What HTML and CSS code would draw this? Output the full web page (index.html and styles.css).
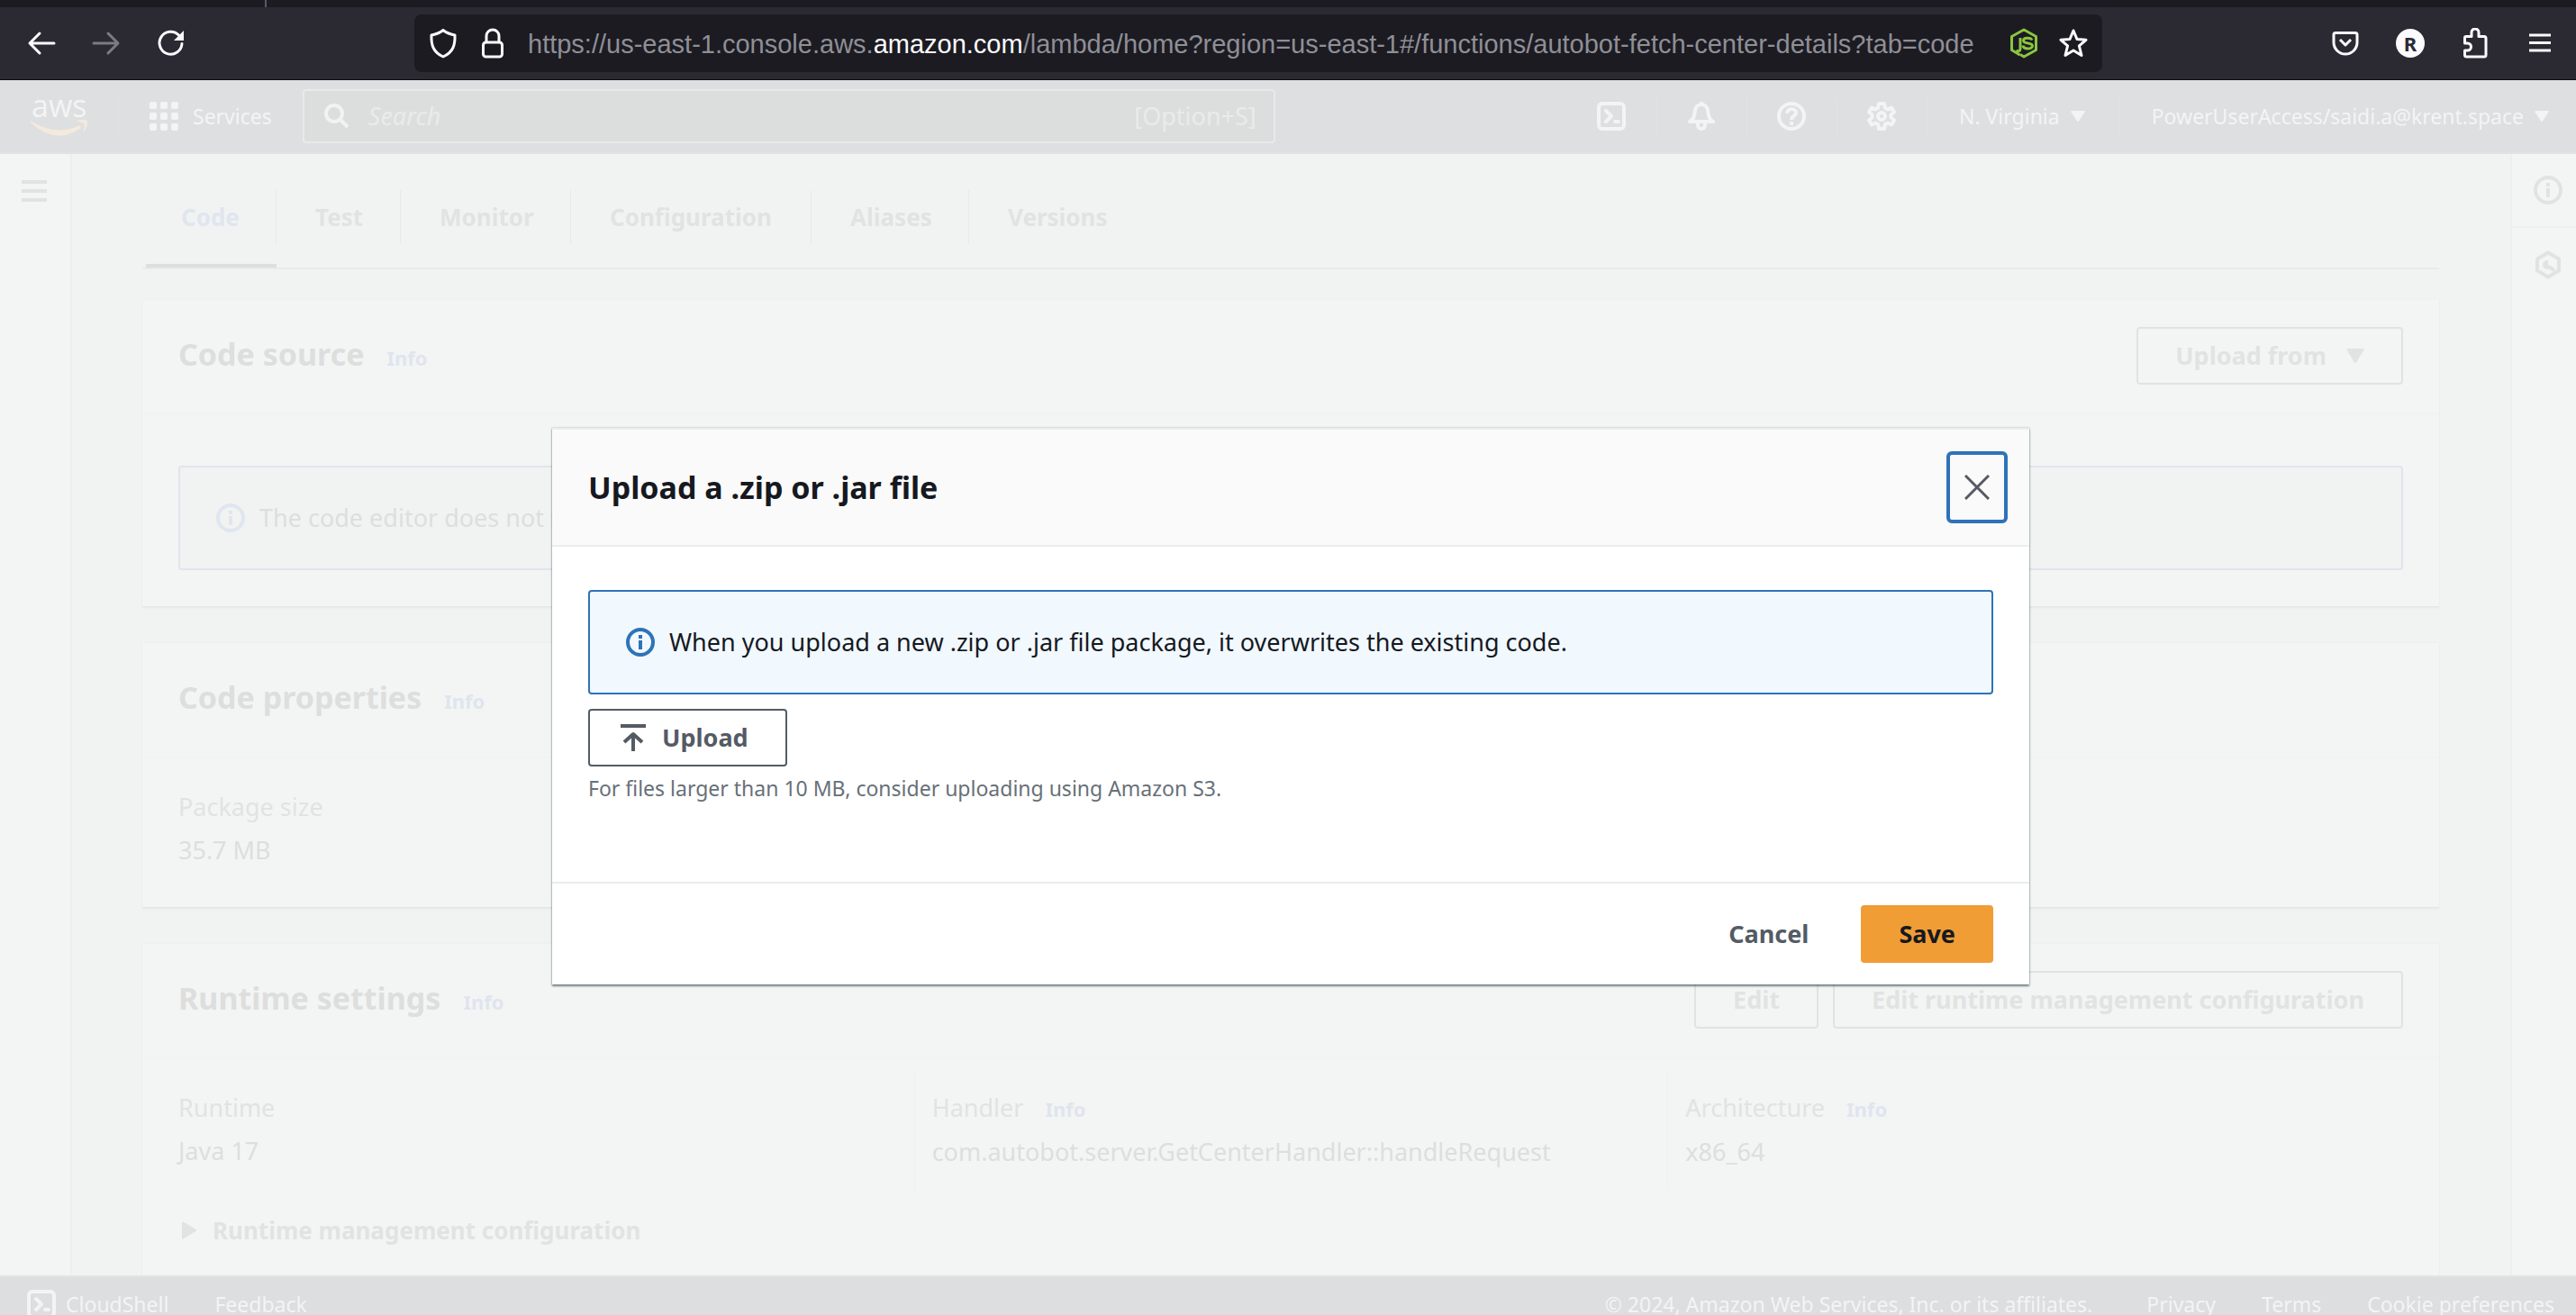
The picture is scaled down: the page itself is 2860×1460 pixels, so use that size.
FILE: index.html
```html
<!DOCTYPE html>
<html lang="en">
<head>
<meta charset="utf-8">
<title>autobot-fetch-center-details - Lambda</title>
<link rel="stylesheet" href="styles.css">
</head>
<body>
<svg class="sprite" aria-hidden="true">
  <symbol id="info" viewBox="0 0 32 32"><circle cx="16" cy="16" r="14" fill="none" stroke="currentColor" stroke-width="4"/><path d="M16 14v10M16 8v4" fill="none" stroke="currentColor" stroke-width="4"/></symbol>
  <symbol id="shell" viewBox="0 0 32 32"><rect x="2" y="2" width="28" height="28" rx="4" fill="none" stroke="currentColor" stroke-width="4"/><path d="M10 10l6 6-6 6M20 22h4" fill="none" stroke="currentColor" stroke-width="4" stroke-linecap="round" stroke-linejoin="round"/></symbol>
  <symbol id="caret" viewBox="0 0 20 16"><path d="M1.500 0h17q1.500 0 1 1.500l-8.500 14q-1 1-2 0L.5 1.500Q0 0 1.500 0z" fill="currentColor"/></symbol>
</svg>

<header class="browser">
  <div class="tabstrip"><span class="tabstrip-mark"></span></div>
  <div class="toolbar">
    <div class="tools">
      <button class="tool" aria-label="Back"><svg width="32" height="32" viewBox="0 0 32 32"><path d="M30 16H4M14 5L3 16l11 11" class="line thick"/></svg></button>
      <button class="tool tool-off" aria-label="Forward"><svg width="32" height="32" viewBox="0 0 32 32"><path d="M2 16h26M18 5l11 11-11 11" class="line thick"/></svg></button>
      <button class="tool" aria-label="Reload"><svg width="32" height="32" viewBox="0 0 32 32"><path d="M28 16.500A12.500 12.500 0 1 1 24.500 7" class="line thick"/><path d="M30 2v11H19z" fill="currentColor"/></svg></button>
    </div>
    <div class="urlbar">
      <svg width="32" height="34" viewBox="0 0 32 34"><path d="M16 2.500C12 6 8 7 3 8c-.5 11 2 19 13 24C27 27 29.500 19 29 8 24 7 20 6 16 2.500z" class="line"/></svg>
      <svg width="32" height="34" viewBox="0 0 32 34"><rect x="5.500" y="16" width="21" height="16" rx="3" class="line"/><path d="M9 16V9a7 7 0 0 1 14 0v7" class="line"/></svg>
      <div class="url">https://us-east-1.console.aws.<span class="host">amazon.com</span>/lambda/home?region=us-east-1#/functions/autobot-fetch-center-details?tab=code</div>
      <svg class="node" width="32" height="34" viewBox="0 0 32 34"><path d="M11.500 30L2.500 24.500v-15L16 2l13.500 7.500v15L16 32l-4-2.500M12 11v12c0 3-2.500 3.500-4.500 2M25 13.500c-1-3-9.500-3.500-9.500.5 0 4.500 10 1.500 10 6 0 4-10 4-10.500-.5" class="line"/></svg>
      <svg width="32" height="34" viewBox="0 0 32 34"><path d="M16 3l4 9.500 10 .8-7.600 6.500 2.600 10.700L16 25l-9 5.500 2.600-10.700L2 13.300l10-.8z" class="line"/></svg>
    </div>
    <div class="tools tools-end">
      <button class="tool" aria-label="Save to Pocket"><svg width="32" height="32" viewBox="0 0 32 32"><path d="M5 4.500h22q2 0 2 2V15a13 13 0 0 1-26 0V6.500q0-2 2-2zM10 12l6 6 6-6" class="line"/></svg></button>
      <button class="tool" aria-label="Account"><span class="avatar">R</span></button>
      <button class="tool" aria-label="Extensions"><svg width="32" height="34" viewBox="0 0 32 34"><path d="M4.500 17v-6q0-1.500 1.500-1.500h6V5a4 4 0 0 1 8 0v4.500h6q2 0 2 2V30q0 2-2 2H6.500q-2 0-2-2v-5h3a4 4 0 0 0 0-8z" class="line"/></svg></button>
      <button class="tool" aria-label="Menu"><svg width="32" height="32" viewBox="0 0 32 32"><path d="M4 7h24M4 15.500h24M4 24h24" class="line"/></svg></button>
    </div>
  </div>
</header>

<div class="app">
  <nav class="awsnav">
    <a class="logo" href="#" aria-label="AWS home"><svg width="66" height="72" viewBox="0 -14 66 72"><text x="1" y="23" class="logo-text">aws</text><path d="M0 27q28 18 55 5l1 3q-28 20-56-6z" class="smile"/><path d="M50 28q8-4 13-1 1 6-5 14 2-7 1-11-3-2-9-2z" class="smile"/></svg></a>
    <button class="services"><svg width="32" height="32" viewBox="0 0 32 32" fill="currentColor"><rect width="8" height="8" rx="2"/><rect x="12" width="8" height="8" rx="2"/><rect x="24" width="8" height="8" rx="2"/><rect y="12" width="8" height="8" rx="2"/><rect x="12" y="12" width="8" height="8" rx="2"/><rect x="24" y="12" width="8" height="8" rx="2"/><rect y="24" width="8" height="8" rx="2"/><rect x="12" y="24" width="8" height="8" rx="2"/><rect x="24" y="24" width="8" height="8" rx="2"/></svg>Services</button>
    <label class="search"><svg width="28" height="28" viewBox="0 0 28 28"><circle cx="11" cy="11" r="9" class="line four"/><path d="M17 17l9 9" class="line four"/></svg><input type="search" placeholder="Search" aria-label="Search"><span>[Option+S]</span></label>
    <div class="nav-end">
      <button class="cell icon-cell" aria-label="CloudShell"><svg width="32" height="32"><use href="#shell"/></svg></button>
      <button class="cell icon-cell" aria-label="Notifications"><svg width="32" height="32" viewBox="0 0 32 32"><path d="M3 22c5-3 5-7 6-12a7 7 0 0 1 14 0c1 5 1 9 6 12zM16 0v4" class="line four"/><path d="M12 24v2a4 4 0 0 0 8 0v-2" class="line four"/></svg></button>
      <button class="cell icon-cell" aria-label="Help"><svg width="32" height="32" viewBox="0 0 32 32"><circle cx="16" cy="16" r="14" class="line four"/><path d="M11 13c0-7 11-6 10 0-1 3-5 3-5 7M16 22v4" class="line four"/></svg></button>
      <button class="cell icon-cell" aria-label="Settings"><svg width="32" height="32" viewBox="0 0 32 32"><path d="M13 2h6l1 5 3 1.500 4-2 3 5-3.500 3v3l3.500 3-3 5-4-2-3 1.500-1 5h-6l-1-5-3-1.500-4 2-3-5 3.500-3v-3L2 11.500l3-5 4 2L12 7z" class="line four"/><circle cx="16" cy="16" r="4" class="line four"/></svg></button>
      <button class="cell region">N. Virginia<svg width="16" height="12" viewBox="0 0 20 16" preserveAspectRatio="none"><use href="#caret"/></svg></button>
      <button class="cell account">PowerUserAccess/saidi.a@krent.space<svg width="16" height="12" viewBox="0 0 20 16" preserveAspectRatio="none"><use href="#caret"/></svg></button>
    </div>
  </nav>

  <div class="workspace">
    <aside class="rail rail-left"><button aria-label="Open navigation"><svg width="32" height="32" viewBox="0 0 32 32"><path d="M2 6h28M2 16h28M2 26h28" class="line four"/></svg></button></aside>

    <main class="content">
      <ul class="tabs">
        <li class="tab active"><a href="#code">Code</a></li>
        <li class="tab"><a href="#test">Test</a></li>
        <li class="tab"><a href="#monitor">Monitor</a></li>
        <li class="tab"><a href="#configuration">Configuration</a></li>
        <li class="tab"><a href="#aliases">Aliases</a></li>
        <li class="tab"><a href="#versions">Versions</a></li>
      </ul>

      <section class="card">
        <header class="card-head">
          <h2>Code source</h2><a class="info" href="#">Info</a>
          <div class="card-actions"><button class="btn">Upload from<svg width="20" height="16"><use href="#caret"/></svg></button></div>
        </header>
        <div class="card-alert"><svg width="32" height="32"><use href="#info"/></svg>The code editor does not support the Java 17 runtime.</div>
      </section>

      <section class="card">
        <header class="card-head"><h2>Code properties</h2><a class="info" href="#">Info</a></header>
        <div class="columns">
          <dl class="column"><dt>Package size</dt><dd>35.7 MB</dd></dl>
        </div>
      </section>

      <section class="card">
        <header class="card-head">
          <h2>Runtime settings</h2><a class="info" href="#">Info</a>
          <div class="card-actions"><button class="btn">Edit</button><button class="btn">Edit runtime management configuration</button></div>
        </header>
        <div class="columns">
          <dl class="column"><dt>Runtime</dt><dd>Java 17</dd></dl>
          <dl class="column"><dt>Handler<a class="info" href="#">Info</a></dt><dd>com.autobot.server.GetCenterHandler::handleRequest</dd></dl>
          <dl class="column"><dt>Architecture<a class="info" href="#">Info</a></dt><dd>x86_64</dd></dl>
        </div>
        <button class="expander"><svg width="16" height="20" viewBox="0 0 16 20"><path d="M0 1.500Q0 0 1.500.5l14 8.500q1 1 0 2l-14 8.500Q0 20 0 18.500z" fill="currentColor"/></svg>Runtime management configuration</button>
      </section>
    </main>

    <aside class="rail rail-right">
      <button aria-label="Help panel"><svg width="32" height="32"><use href="#info"/></svg></button>
      <button aria-label="Tutorials"><svg width="32" height="32" viewBox="0 0 32 32"><path d="M16 2.500l12 7v13l-12 7-12-7v-13z" class="line four"/><path d="M16 11a5 5 0 1 0 1 9.500l5 3.500 2-3-4-3.500-4-1.500z" fill="currentColor"/></svg></button>
    </aside>
  </div>

  <footer class="footer">
    <a class="cloudshell" href="#"><svg width="32" height="32"><use href="#shell"/></svg>CloudShell</a>
    <a href="#">Feedback</a>
    <span class="copyright">© 2024, Amazon Web Services, Inc. or its affiliates.</span>
    <a href="#">Privacy</a>
    <a href="#">Terms</a>
    <a href="#">Cookie preferences</a>
  </footer>

  <div class="overlay">
    <div class="modal" role="dialog" aria-modal="true" aria-labelledby="modal-title">
      <header class="modal-head">
        <h1 id="modal-title">Upload a .zip or .jar file</h1>
        <button class="close" aria-label="Close"><svg width="28" height="28" viewBox="0 0 28 28"><path d="M1 1l26 26M27 1L1 27" class="line"/></svg></button>
      </header>
      <div class="modal-body">
        <div class="alert"><svg width="32" height="32"><use href="#info"/></svg><span>When you upload a new .zip or .jar file package, it overwrites the existing code.</span></div>
        <button class="upload"><svg width="28" height="32" viewBox="0 0 28 32"><path d="M0 3h28M14 31V12" class="line four"/><path d="M4 21l10-9 10 9" class="line four"/></svg>Upload</button>
        <p class="hint">For files larger than 10 MB, consider uploading using Amazon S3.</p>
      </div>
      <footer class="modal-foot">
        <button class="cancel">Cancel</button>
        <button class="save">Save</button>
      </footer>
    </div>
  </div>
</div>
</body>
</html>
```
FILE: styles.css
```css
* { box-sizing: border-box; }
html { height: 100%; overflow: hidden; }
body {
  margin: 0;
  height: calc(100% + 20px);
  display: flex;
  flex-direction: column;
  background: #f1f3f2;
  color: #dddedd;
  font: 27px/44px "Noto Sans", "Open Sans", sans-serif;
}
h1, h2, p, ul, dl, dd { margin: 0; padding: 0; }
a { color: inherit; text-decoration: none; }
svg { flex: none; display: block; }
button {
  margin: 0;
  padding: 0;
  border: 0;
  background: none;
  color: inherit;
  font: inherit;
  display: flex;
  align-items: center;
  justify-content: center;
}
.sprite { position: absolute; width: 0; height: 0; }
.line { fill: none; stroke: currentColor; stroke-width: 3; stroke-linejoin: round; }
.thick { stroke-width: 3; stroke-linecap: round; }
.four { stroke-width: 4; }

/* Browser toolbar */
.browser { flex: none; background: #2b2a33; color: #fbfbfe; border-bottom: 1px solid #0c0c0d; }
.tabstrip { height: 8px; padding-left: 294px; background: #1c1b22; }
.tabstrip-mark { display: block; width: 2px; height: 8px; background: #5b5a63; }
.toolbar { height: 80px; display: grid; grid-template-columns: 460px 1fr 526px; align-items: center; }
.tools { display: flex; padding: 0 10px; }
.tools-end { justify-content: flex-end; padding: 0 4px; }
.tool { width: 72px; height: 72px; }
.tool-off { color: #7c7b81; }
.avatar { width: 32px; height: 32px; border-radius: 50%; background: #fbfbfe; color: #2b2a33; font: 700 22px/32px "Noto Sans", sans-serif; text-align: center; }
.urlbar { height: 64px; padding: 0 16px; border-radius: 8px; background: #1c1b22; display: flex; align-items: center; gap: 23px; }
.url { flex: 1; padding-top: 2px; color: #8f8f96; font: 29px/40px "Liberation Sans", Arial, sans-serif; white-space: nowrap; overflow: hidden; }
.host { color: #fbfbfe; }
.node { color: #8bc53f; }

/* Console navigation */
.app { flex: 1; min-height: 0; position: relative; display: flex; flex-direction: column; }
.awsnav { flex: none; height: 82px; display: flex; align-items: center; background: #dedfe1; border-bottom: 2px solid #e1e3e3; color: #f3f5f4; font-size: 23px; }
.logo { width: 132px; height: 44px; padding-left: 34px; border-right: 1px solid #e1e2e4; display: flex; align-items: center; }
.logo-text { font: 34px "Open Sans", sans-serif; fill: #f3f5f4; }
.smile { fill: #f3e9dc; }
.services { gap: 16px; padding: 0 34px; }
.search { width: 1080px; height: 60px; padding: 0 19px 0 22px; border: 2px solid #e8eaea; border-radius: 4px; background: #dcdedd; color: #e9ebeb; display: flex; align-items: center; gap: 21px; font-size: 27px; }
.search svg { color: #f1f3f3; }
.search input { flex: 1; min-width: 0; padding: 0; border: 0; outline: 0; background: none; color: inherit; font: italic 27px/40px "Noto Sans", sans-serif; }
.search input::placeholder { color: #e9ebeb; opacity: 1; }
.nav-end { margin-left: auto; display: flex; }
.cell { height: 44px; gap: 12px; border-right: 1px solid #e1e2e4; white-space: nowrap; }
.icon-cell { width: 100px; }
.region { padding: 0 37px 0 35px; }
.account { padding: 0 30px 0 36px; border: 0; }

/* Page columns */
.workspace { flex: 1; min-height: 0; display: grid; grid-template-columns: 80px minmax(0, 1fr) 73px; overflow: hidden; }
.rail { background: #f3f5f4; color: #e1e3e2; }
.rail-left { border-right: 2px solid #edefee; }
.rail-right { border-left: 2px solid #edefee; }
.rail button { width: 100%; height: 82px; }
.rail-left button { padding-right: 2px; }
.rail-right button { padding-left: 8px; }
.rail-right button:first-child { border-bottom: 2px solid #edefee; }
.content { padding: 38px 79px 0 78px; min-height: 0; overflow: hidden; }

.tabs { list-style: none; height: 90px; margin-bottom: 34px; padding-left: 4px; display: grid; grid-template-columns: 145px 138px 189px 267px 175px 175px; border-bottom: 2px solid #e8eaea; }
.tab { padding-top: 2px; border-bottom: 4px solid transparent; }
.tab a { display: block; height: 60px; padding-left: 39px; border-right: 1px solid #e8eaea; color: #e1e3e2; font: 700 26px/60px "Noto Sans", sans-serif; }
.tab + .tab a { padding-left: 43px; }
.tab:last-child a { border: 0; }
.tab.active { border-color: #dddedd; }
.tab.active a { color: #dfe6ef; }

.card { margin-bottom: 41px; background: #f3f5f4; box-shadow: 0 2px 2px #e5e7e6, 0 0 0 1px #eff1f0; }
.card-head { min-height: 127px; padding: 30px 40px 32px; border-bottom: 1px solid #f0f2f1; display: flex; align-items: baseline; gap: 25px; }
.card-head h2 { font: 700 34px/60px "Noto Sans", sans-serif; }
.info { color: #dfe5ef; font-size: 22px; font-weight: 700; }
.card-actions { margin-left: auto; display: flex; gap: 16px; align-self: flex-start; }
.btn { height: 64px; padding: 0 41px; gap: 22px; border: 2px solid #e1e3e2; border-radius: 4px; color: #e1e3e2; font-weight: 700; }
.card-alert { margin: 0 40px; height: 116px; padding: 0 40px; border: 2px solid #dfe5ed; border-radius: 4px; background: #f1f3f2; display: flex; align-items: center; gap: 16px; }
.card-alert svg { color: #dfe6ef; }
.card-head + .card-alert { margin-top: 57px; }
.card:has(.card-alert) { padding-bottom: 40px; }

.columns { padding: 15px 20px 20px; display: grid; grid-template-columns: repeat(3, minmax(0, 1fr)); }
.column { padding: 18px 19px 21px; border-left: 1px solid #eef0ef; }
.column:first-child { border-color: transparent; }
.column dt { margin-bottom: 4px; color: #e1e3e2; display: flex; align-items: baseline; gap: 24px; }
.expander { padding: 2px 44px 40px; gap: 18px; color: #e1e3e2; font-size: 26px; font-weight: 700; }

.footer { flex: none; height: 64px; padding: 0 24px 2px 30px; border-top: 2px solid #e1e4e3; background: #dddee0; color: #f3f5f4; display: flex; align-items: center; gap: 51px; font-size: 23px; white-space: nowrap; }
.cloudshell { display: flex; align-items: center; gap: 11px; }
.copyright { margin-left: auto; padding-right: 9px; }

/* Upload dialog */
.overlay { position: absolute; inset: 0; padding: 0 0 1px 6px; display: flex; align-items: center; justify-content: center; }
.modal { width: 1640px; max-width: 100%; background: #fff; color: #16191f; box-shadow: 0 2px 2px rgba(0, 28, 36, .5), 0 0 2px rgba(0, 28, 36, .3); }
.modal-head { padding: 24px 24px 24px 40px; border-top: 2px solid #eaeded; border-bottom: 2px solid #eaeded; background: #fafafa; display: flex; align-items: center; justify-content: space-between; }
.modal-head h1 { font: 700 34px/44px "Noto Sans", sans-serif; }
.close { width: 68px; height: 80px; border: 4px solid #2e73b8; border-radius: 6px; color: #545b64; }
.modal-body { padding: 48px 40px 86px; }
.alert { height: 116px; padding: 0 40px; border: 2px solid #2e73b8; border-radius: 4px; background: #f1f8fe; display: flex; align-items: center; gap: 16px; }
.alert svg { color: #2e73b8; }
.upload { height: 64px; margin: 16px 0 6px; padding: 0 41px 0 34px; gap: 18px; border: 2px solid #545b64; border-radius: 4px; color: #545b64; font-weight: 700; }
.hint { color: #687078; font-size: 23px; line-height: 36px; }
.modal-foot { padding: 24px 40px; border-top: 2px solid #eaeded; display: flex; justify-content: flex-end; gap: 16px; font-weight: 700; }
.modal-foot button { height: 64px; padding: 0 42px; border-radius: 4px; color: #545b64; }
.modal-foot .save { background: #f09d36; color: #16191f; }
```
